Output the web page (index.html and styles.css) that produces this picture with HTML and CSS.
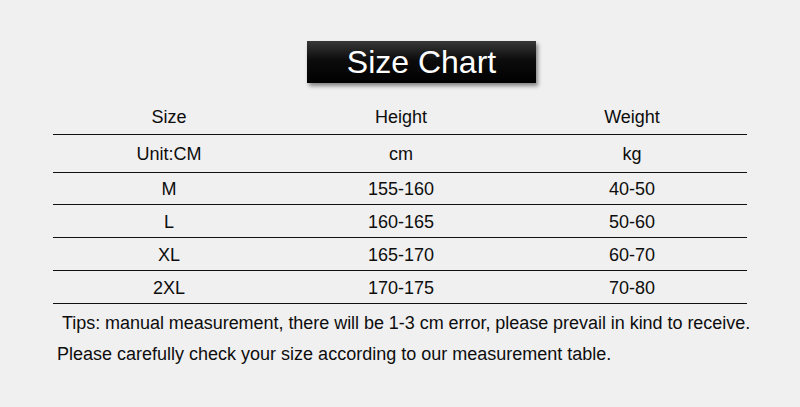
FILE: index.html
```html
<!DOCTYPE html>
<html>
<head>
<meta charset="utf-8">
<link rel="stylesheet" href="styles.css">
</head>
<body>
<div class="page">
  <div class="title-wrap"><div class="title">Size Chart</div></div>
  <div class="table">
    <div class="row head"><div>Size</div><div>Height</div><div>Weight</div></div>
    <div class="row unit"><div>Unit:CM</div><div>cm</div><div>kg</div></div>
    <div class="row first"><div>M</div><div>155-160</div><div>40-50</div></div>
    <div class="row"><div>L</div><div>160-165</div><div>50-60</div></div>
    <div class="row"><div>XL</div><div>165-170</div><div>60-70</div></div>
    <div class="row"><div>2XL</div><div>170-175</div><div>70-80</div></div>
  </div>
  <p class="tips">Tips: manual measurement, there will be 1-3 cm error, please prevail in kind to receive.</p>
  <p class="note">Please carefully check your size according to our measurement table.</p>
</div>
</body>
</html>
```
FILE: styles.css
```css
html, body {
  margin: 0;
  padding: 0;
  background: #f0f0f0;
}
body {
  font-family: "Liberation Sans", Arial, sans-serif;
  color: #0d0d0d;
  width: 800px;
  height: 407px;
  overflow: hidden;
}
.page {
  padding: 41px 0 0 53px;
  width: 694px;
}
.title-wrap {
  padding-left: 254px;
}
.title {
  width: 229px;
  height: 42px;
  box-sizing: border-box;
  background: linear-gradient(to bottom, #383838 0%, #0c0c0c 45%, #000 100%);
  color: #fff;
  font-size: 32px;
  line-height: 43px;
  text-align: center;
  box-shadow: 2px 3px 4px rgba(0,0,0,0.45);
}
.table {
  margin-top: 16px;
  font-size: 18px;
}
.row {
  display: grid;
  grid-template-columns: 232px 232px 230px;
  height: 32px;
  border-bottom: 1px solid #111;
  align-items: center;
  text-align: center;
  padding-top: 1px;
  box-sizing: content-box;
}
.row > div { line-height: 20px; }
.row.head { height: 34px; }
.row.unit { height: 36px; }
.row.first { height: 30px; }
.row:not(.head):not(.unit):not(.first) { height: 31px; }
.tips {
  margin: 8px 0 0 9px;
  font-size: 18px;
  line-height: 22px;
  letter-spacing: -0.04px;
  white-space: nowrap;
}
.note {
  margin: 9px 0 0 4px;
  font-size: 18px;
  line-height: 22px;
  white-space: nowrap;
}
```
